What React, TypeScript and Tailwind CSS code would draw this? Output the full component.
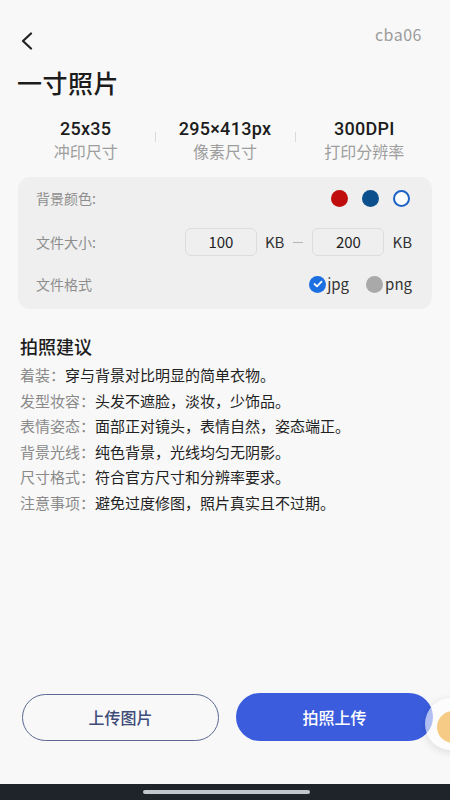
import React from 'react';

const stats = [
  { value: '25x35', label: '冲印尺寸' },
  { value: '295×413px', label: '像素尺寸' },
  { value: '300DPI', label: '打印分辨率' },
];

const tips = [
  { label: '着装：', text: '穿与背景对比明显的简单衣物。' },
  { label: '发型妆容：', text: '头发不遮脸，淡妆，少饰品。' },
  { label: '表情姿态：', text: '面部正对镜头，表情自然，姿态端正。' },
  { label: '背景光线：', text: '纯色背景，光线均匀无阴影。' },
  { label: '尺寸格式：', text: '符合官方尺寸和分辨率要求。' },
  { label: '注意事项：', text: '避免过度修图，照片真实且不过期。' },
];

function SizeInput({ value }: { value: string }) {
  return (
    <div className="flex h-[28px] w-[72px] items-center justify-center rounded-[6px] border border-[#dcdcdc] text-[15px] text-[#222]">
      {value}
    </div>
  );
}

export default function App() {
  return (
    <div className="relative flex h-[800px] w-[450px] flex-col overflow-hidden bg-[#f8f8f8] font-['Noto_Sans_CJK_SC','Noto_Sans',sans-serif] text-[#1c1c1c]">
      {/* header */}
      <div className="flex items-start justify-between pl-5 pr-7 pt-[24px]">
        <svg width="14" height="18" viewBox="0 0 14 18" className="mt-[8px]">
          <path d="M11 1.5 L3 9 L11 16.5" fill="none" stroke="#222" strokeWidth="2.2" strokeLinecap="round" strokeLinejoin="round" />
        </svg>
        <span className="text-[16px] leading-[20px] tracking-[0.5px] text-[#9c9c9c]">cba06</span>
      </div>

      <h1 className="mt-[16px] pl-[17px] text-[25px] font-medium leading-[32px] tracking-[0.5px]">一寸照片</h1>

      {/* stats */}
      <div className="mt-[20px] grid grid-cols-3 px-4">
        {stats.map((s, i) => (
          <div key={s.value} className="relative flex flex-col items-center">
            <span className="font-['Roboto',sans-serif] text-[18px] font-medium leading-[21.5px] tracking-[0.3px]">{s.value}</span>
            <span className="text-[16px] leading-[23.5px] text-[#9e9e9e]">{s.label}</span>
            {i > 0 && <span className="absolute left-0 top-[14px] h-[10px] w-px bg-[#dadada]" />}
          </div>
        ))}
      </div>

      {/* options card */}
      <div className="mx-[18px] mt-[14px] rounded-[12px] bg-[#efefef] pb-[12px] pl-[18px] pr-5 pt-[6px] text-[14px] text-[#8e8e8e]">
        <div className="flex h-[30px] items-center justify-between">
          <span>背景颜色:</span>
          <div className="mr-[2px] flex items-center gap-[14px]">
            <span className="h-[17px] w-[17px] rounded-full bg-[#c00c0c]" />
            <span className="h-[17px] w-[17px] rounded-full bg-[#0b4f8c]" />
            <span className="h-[17px] w-[17px] rounded-full border-[2.5px] border-[#1d63c6] bg-white" />
          </div>
        </div>
        <div className="flex h-[58px] items-center justify-between">
          <span>文件大小:</span>
          <div className="flex items-center text-[15px] text-[#333]">
            <SizeInput value="100" />
            <span className="ml-2">KB</span>
            <span className="mx-[9px] h-px w-[10px] bg-[#b5b5b5]" />
            <SizeInput value="200" />
            <span className="ml-2">KB</span>
          </div>
        </div>
        <div className="flex h-[26px] items-center justify-between">
          <span>文件格式</span>
          <div className="flex items-center text-[15px] text-[#333]">
            <span className="flex h-[17px] w-[17px] items-center justify-center rounded-full bg-[#1b6fe0]">
              <svg width="10" height="8" viewBox="0 0 10 8">
                <path d="M1.5 4 L4 6.3 L8.5 1.7" fill="none" stroke="#fff" strokeWidth="1.8" strokeLinecap="round" strokeLinejoin="round" />
              </svg>
            </span>
            <span className="ml-px">jpg</span>
            <span className="ml-[17px] h-[17px] w-[17px] rounded-full bg-[#a9a9a9]" />
            <span className="ml-[2px]">png</span>
          </div>
        </div>
      </div>

      {/* tips */}
      <h2 className="mt-[25px] pl-5 text-[18px] font-medium leading-[24px]">拍照建议</h2>
      <div className="mt-[4px] flex flex-col pl-5 text-[15px] leading-[25.6px]">
        {tips.map((t) => (
          <div key={t.label}>
            <span className="text-[#8a8a8a]">{t.label}</span>
            <span className="text-[#222]">{t.text}</span>
          </div>
        ))}
      </div>

      <div className="flex-1" />

      {/* actions */}
      <div className="flex items-center justify-between pl-[22px] pr-[17px]">
        <button className="flex h-[47px] w-[197px] items-center justify-center rounded-full border border-[#5b6994] text-[16px] font-medium text-[#3f4c78]">
          上传图片
        </button>
        <button className="flex h-[48px] w-[197px] items-center justify-center rounded-full bg-[#3b5ddd] text-[16px] font-medium text-white">
          拍照上传
        </button>
      </div>

      <div className="h-[43px]" />

      {/* system nav bar */}
      <div className="h-[16px] bg-[#1f232a] pl-[143px] pt-[6px]">
        <div className="h-[4px] w-[167px] rounded-full bg-[#c3c6ca]" />
      </div>

      {/* floating assist button */}
      <div className="absolute left-[425px] top-[698px] flex h-[52px] w-[52px] items-center justify-center rounded-full bg-white/60 shadow-[0_2px_8px_rgba(0,0,0,0.12)]">
        <span className="ml-[4px] mt-[6px] h-[32px] w-[32px] rounded-full bg-[#f6cb86]" />
      </div>
    </div>
  );
}
